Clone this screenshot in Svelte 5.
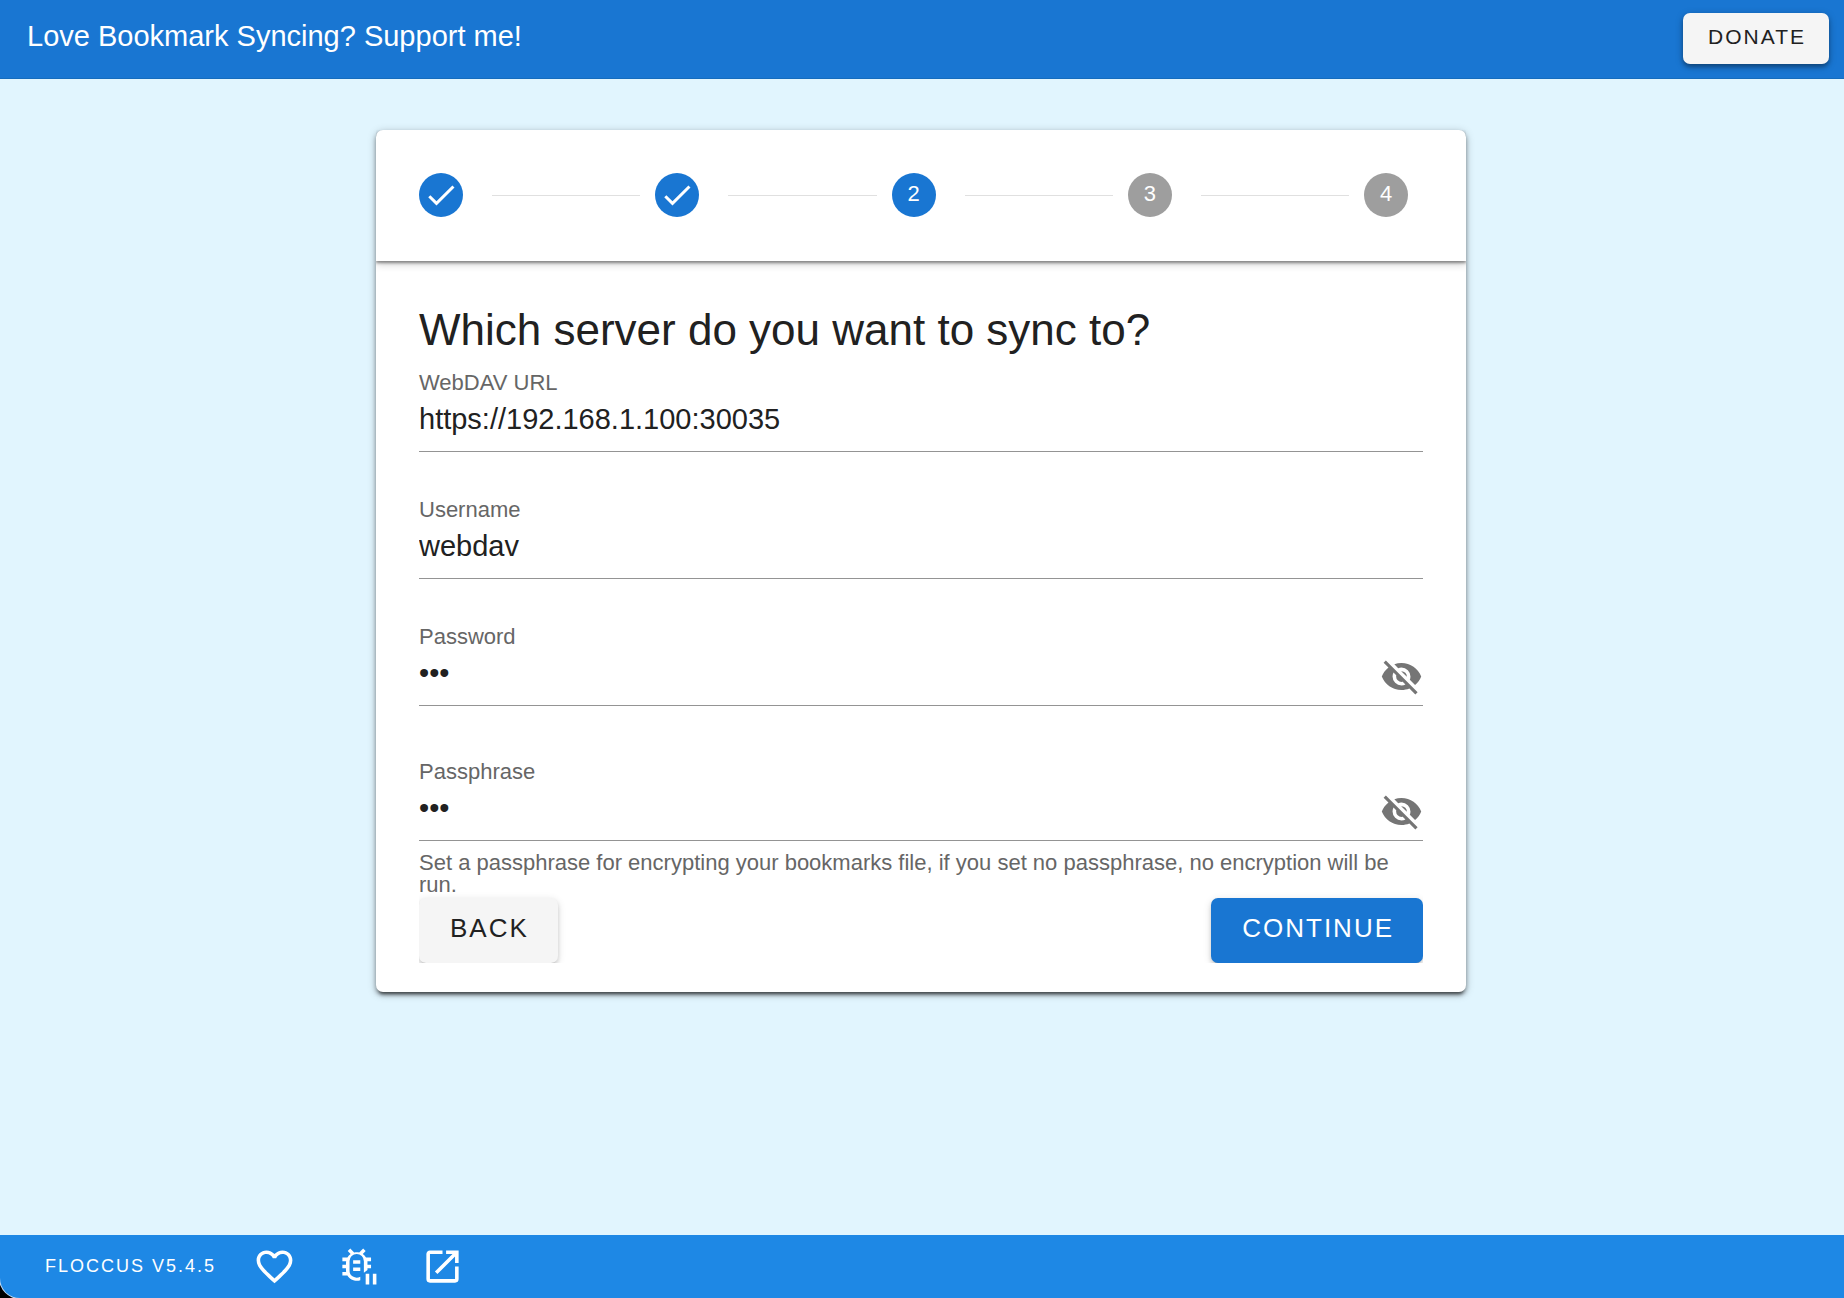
<script>
  const steps = [
    { label: '0', done: true, active: true },
    { label: '1', done: true, active: true },
    { label: '2', done: false, active: true },
    { label: '3', done: false, active: false },
    { label: '4', done: false, active: false }
  ];
  let url = $state('https://192.168.1.100:30035');
  let username = $state('webdav');
  let password = $state('abc');
  let passphrase = $state('abc');
  let showPassword = $state(false);
  let showPassphrase = $state(false);
</script>

{#snippet eyeOff()}
  <svg class="icon" viewBox="0 0 24 24" aria-hidden="true"><path d="M11.83,9L15,12.16C15,12.11 15,12.05 15,12A3,3 0 0,0 12,9C11.94,9 11.89,9 11.83,9M7.53,9.8L9.08,11.35C9.03,11.56 9,11.77 9,12A3,3 0 0,0 12,15C12.22,15 12.44,14.97 12.65,14.92L14.2,16.47C13.53,16.8 12.79,17 12,17A5,5 0 0,1 7,12C7,11.21 7.2,10.47 7.53,9.8M2,4.27L4.28,6.55L4.73,7C3.08,8.3 1.78,10 1,12C2.73,16.39 7,19.5 12,19.5C13.55,19.5 15.03,19.2 16.38,18.66L16.81,19.08L19.73,22L21,20.73L3.27,3M12,7A5,5 0 0,1 17,12C17,12.64 16.87,13.26 16.64,13.82L19.57,16.75C21.07,15.5 22.27,13.86 23,12C21.27,7.61 17,4.5 12,4.5C10.6,4.5 9.26,4.75 8,5.2L10.17,7.35C10.74,7.13 11.35,7 12,7Z" /></svg>
{/snippet}

<div class="app">
  <header class="banner">
    <span class="pitch">Love Bookmark Syncing? Support me!</span>
    <button class="btn donate" type="button">DONATE</button>
  </header>

  <main>
    <section class="card">
      <ol class="stepper">
        {#each steps as step, i}
          {#if i > 0}<li class="line" aria-hidden="true"></li>{/if}
          <li class="step" class:active={step.active}>
            {#if step.done}
              <svg class="check" viewBox="0 0 24 24" role="img" aria-label="Completed"><path d="M21,7L9,19L3.5,13.5L4.91,12.09L9,16.17L19.59,5.59L21,7Z" /></svg>
            {:else}{step.label}{/if}
          </li>
        {/each}
      </ol>

      <form class="content" onsubmit={(e) => e.preventDefault()}>
        <h1>Which server do you want to sync to?</h1>
        <div class="field">
          <label for="url">WebDAV URL</label>
          <div class="control"><input id="url" type="text" bind:value={url} /></div>
        </div>
        <div class="field">
          <label for="username">Username</label>
          <div class="control"><input id="username" type="text" bind:value={username} /></div>
        </div>
        <div class="field">
          <label for="password">Password</label>
          <div class="control">
            <input id="password" type={showPassword ? 'text' : 'password'} bind:value={password} />
            <button class="toggle" type="button" aria-label="Show password" onclick={() => (showPassword = !showPassword)}>{@render eyeOff()}</button>
          </div>
        </div>
        <div class="field passphrase">
          <label for="passphrase">Passphrase</label>
          <div class="control">
            <input id="passphrase" type={showPassphrase ? 'text' : 'password'} bind:value={passphrase} aria-describedby="hint" />
            <button class="toggle" type="button" aria-label="Show passphrase" onclick={() => (showPassphrase = !showPassphrase)}>{@render eyeOff()}</button>
          </div>
          <p id="hint">Set a passphrase for encrypting your bookmarks file, if you set no passphrase, no encryption will be run.</p>
        </div>
        <div class="actions">
          <button class="btn back" type="button">BACK</button>
          <button class="btn continue" type="submit">CONTINUE</button>
        </div>
      </form>
    </section>
  </main>

  <div class="footer-frame">
    <footer>
      <span class="version">FLOCCUS V5.4.5</span>
      <nav>
        <a href="#donate" aria-label="Donate">
          <svg class="icon" viewBox="0 0 24 24" aria-hidden="true"><path d="M12.1,18.55L12,18.65L11.89,18.55C7.14,14.24 4,11.39 4,8.5C4,6.5 5.5,5 7.5,5C9.04,5 10.54,6 11.07,7.36H12.93C13.46,6 14.96,5 16.5,5C18.5,5 20,6.5 20,8.5C20,11.39 16.86,14.24 12.1,18.55M16.5,3C14.76,3 13.09,3.81 12,5.08C10.91,3.81 9.24,3 7.5,3C4.42,3 2,5.41 2,8.5C2,12.27 5.4,15.36 10.55,20.03L12,21.35L13.45,20.03C18.6,15.36 22,12.27 22,8.5C22,5.41 19.58,3 16.5,3Z" /></svg>
        </a>
        <a href="#debug" aria-label="Debug logs">
          <svg class="icon" viewBox="0 0 24 24" aria-hidden="true"><path d="M13 8.5H9V10.5H13V8.5M13 12.5H9V14.5H13V12.5M16 16V22H18V16H16M20 16V22H22V16H20M13 17.7A4 4 0 0 1 7 14V9A4 4 0 0 1 15 9V14L16.5 13H19V11H17V9H19V7H16.2C15.7 6.2 15.1 5.5 14.4 5L16 3.4L14.6 2L12.4 4.2C11.5 4 10.5 4 9.6 4.2L7.4 2L6 3.4L7.6 5C6.9 5.5 6.3 6.2 5.8 7H3V9H5.1C5 9.7 5 10.3 5 11H3V13H5C5 13.7 5 14.3 5.1 15H3V17H5.8C7.2 19.4 10.4 20.6 13 19.7V17.7M15 11V15.5L17 14V11Z" /></svg>
        </a>
        <a href="#open" aria-label="Open in new tab">
          <svg class="icon" viewBox="0 0 24 24" aria-hidden="true"><path d="M14,3V5H17.59L7.76,14.83L9.17,16.24L19,6.41V10H21V3M19,19H5V5H12V3H5C3.89,3 3,3.9 3,5V19A2,2 0 0,0 5,21H19A2,2 0 0,0 21,19V12H19V19Z" /></svg>
        </a>
      </nav>
    </footer>
  </div>
</div>

<style>
  :global(body) {
    background: #e1f5fe;
  }
  .app {
    min-height: 100vh;
    display: flex;
    flex-direction: column;
    background: #e1f5fe;
    color: #212121;
    font-family: 'Liberation Sans', Helvetica, Arial, sans-serif;
  }
  button, input {
    font-family: inherit;
    color: inherit;
    border: 0;
    margin: 0;
    padding: 0;
    outline: none;
    background: none;
  }
  .banner {
    display: flex;
    justify-content: space-between;
    align-items: flex-start;
    box-sizing: border-box;
    height: 79px;
    padding: 13px 15px 0 27px;
    background: #1976d2;
    border-bottom: 1px solid #156cbd;
    color: #fff;
  }
  .pitch {
    font-size: 29px;
    line-height: 46px;
  }
  .btn {
    border-radius: 7px;
    letter-spacing: 2px;
    cursor: pointer;
    background: #f5f5f5;
    color: #212121;
    box-shadow: 0 5px 2px -4px rgba(0, 0, 0, 0.2), 0 3px 4px rgba(0, 0, 0, 0.14), 0 2px 8px rgba(0, 0, 0, 0.12);
  }
  .donate {
    height: 51px;
    padding: 0 23px 4px 25px;
    font-size: 21px;
    box-shadow: 0 3px 4px rgba(0, 0, 0, 0.3), 0 2px 8px rgba(0, 0, 0, 0.2);
  }
  main {
    flex: 1;
    padding: 51px 26px 51px 24px;
  }
  .card {
    max-width: 1090px;
    margin: 0 auto;
    background: #fff;
    border-radius: 7px;
    box-shadow: 0 5px 3px -3px rgba(0, 0, 0, 0.45), 0 3px 4px rgba(0, 0, 0, 0.35), 0 2px 9px rgba(0, 0, 0, 0.25);
  }
  .stepper {
    display: flex;
    align-items: center;
    list-style: none;
    margin: 0;
    padding: 43px 58px 44px 43px;
    border-radius: 7px 7px 0 0;
    box-shadow: 0 2px 3px rgba(0, 0, 0, 0.4), 0 3px 9px rgba(0, 0, 0, 0.2);
    clip-path: inset(0 0 -20px 0);
  }
  .step {
    display: flex;
    justify-content: center;
    width: 44px;
    height: 44px;
    border-radius: 50%;
    background: #9e9e9e;
    color: #fff;
    font-size: 22px;
    line-height: 42px;
  }
  .step.active {
    background: #1976d2;
  }
  .check {
    width: 36px;
    fill: #fff;
  }
  .line {
    flex: 1;
    height: 1px;
    margin: 0 15px 0 29px;
    background: #e0e0e0;
  }
  .content {
    padding: 41px 43px 29px;
  }
  h1 {
    margin: 0 0 11px;
    font-size: 44px;
    line-height: 56px;
    font-weight: 400;
  }
  .field {
    margin-bottom: 44px;
  }
  .field.passphrase {
    margin: 52px 0 2px;
  }
  label {
    display: block;
    font-size: 22px;
    line-height: 28px;
    color: #666;
  }
  .control {
    display: flex;
    align-items: flex-start;
    height: 54px;
    border-bottom: 1px solid #949494;
  }
  input {
    flex: 1;
    min-width: 0;
    height: 44px;
    font-size: 29px;
  }
  .icon {
    display: block;
    width: 43px;
    height: 43px;
    fill: currentColor;
  }
  .toggle {
    margin-top: 4px;
    color: #757575;
    cursor: pointer;
  }
  #hint {
    margin: 0;
    padding-top: 11px;
    font-size: 22px;
    line-height: 22px;
    color: #666;
  }
  .actions {
    display: flex;
    justify-content: space-between;
    clip-path: inset(-9px 0 0 0);
  }
  .actions .btn {
    height: 65px;
    padding: 0 29px 4px 31px;
    font-size: 26px;
  }
  .actions .continue {
    background: #1976d2;
    color: #fff;
  }
  .footer-frame {
    overflow: hidden;
    background: #000;
  }
  footer {
    display: flex;
    align-items: center;
    box-sizing: border-box;
    height: 63px;
    padding-left: 45px;
    gap: 37px;
    background: #1e88e5;
    border-bottom-left-radius: 20px;
    box-shadow: 0 0 0 1px #c3dcf5;
    color: #fff;
  }
  .version {
    font-size: 18px;
    letter-spacing: 2px;
  }
  nav {
    display: flex;
    gap: 41px;
  }
  nav a {
    color: inherit;
  }
</style>
